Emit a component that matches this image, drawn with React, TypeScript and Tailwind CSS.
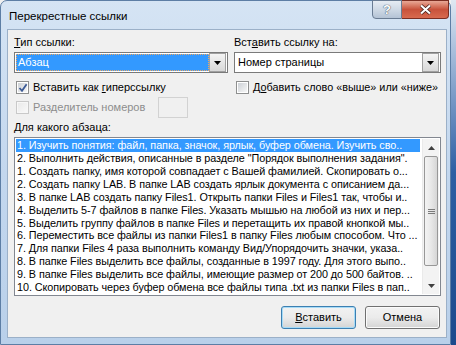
import React from "react";

const items = [
  "1. Изучить понятия: файл, папка, значок, ярлык, буфер обмена. Изучить сво..",
  '2. Выполнить действия, описанные в разделе "Порядок выполнения задания".',
  "1. Создать папку, имя которой совпадает с Вашей фамилией. Скопировать о...",
  "2. Создать папку LAB. В папке LAB создать ярлык документа с описанием да...",
  "3. В папке LAB создать папку Files1. Открыть папки Files и Files1 так, чтобы и..",
  "4. Выделить 5-7 файлов в папке Files. Указать мышью на любой из них и пер...",
  "5. Выделить группу файлов в папке Files и перетащить их правой кнопкой мы..",
  "6. Переместить все файлы из папки Files1 в папку Files любым способом. Что ...",
  "7. Для папки Files 4 раза выполнить команду Вид/Упорядочить значки, указа..",
  "8. В папке Files выделить все файлы, созданные в 1997 году. Для этого выпо..",
  "9. В папке Files выделить все файлы, имеющие размер от 200 до 500 байтов. ..",
  "10. Скопировать через буфер обмена все файлы типа .txt из папки Files в пап..",
];

function Check({ checked, disabled }: { checked?: boolean; disabled?: boolean }) {
  return (
    <span
      className={`relative w-[13px] h-[13px] shrink-0 border p-[1px] ${
        disabled ? "border-[#c9c9c9] bg-[#f7f7f7]" : "border-[#8e8f8f] bg-white"
      }`}
    >
      <span
        className={`block w-full h-full bg-gradient-to-br ${
          disabled ? "from-[#eaeaea] to-[#f8f8f8]" : "from-[#cdd1d6] to-[#f7f7f7]"
        }`}
      />
      {checked && (
        <svg className="absolute left-[1px] top-[1px]" width="10" height="10" viewBox="0 0 10 10">
          <path d="M1.5 5 L4 7.8 L8.6 1.2" fill="none" stroke="#3c5a96" strokeWidth="1.8" />
        </svg>
      )}
    </span>
  );
}

function DropArrow() {
  return (
    <span className="w-[17px] h-[19px] shrink-0 flex items-center justify-center border border-[#a0a0a0] bg-gradient-to-b from-[#f4f4f4] to-[#d8d8d8]">
      <svg width="7" height="4" viewBox="0 0 7 4">
        <path d="M0 0 H7 L3.5 4 Z" fill="#000" />
      </svg>
    </span>
  );
}

function Button({ children, primary }: { children: React.ReactNode; primary?: boolean }) {
  return (
    <div
      className={`w-[75px] h-[23px] rounded-[3px] border flex items-center justify-center ${
        primary
          ? "border-[#3c7fb1] shadow-[inset_0_0_0_1px_#a6dbf7]"
          : "border-[#707070] shadow-[inset_0_0_0_1px_#fbfbfb]"
      } bg-gradient-to-b from-[#f2f2f2] via-[#ebebeb] to-[#d4d4d4]`}
    >
      {children}
    </div>
  );
}

export default function App() {
  return (
    <div
      className="w-[456px] h-[345px] flex bg-[#f0f0f0] text-[11px] text-black leading-[15px] whitespace-nowrap"
      style={{ fontFamily: '"Liberation Sans", Arial, sans-serif' }}
    >
      {/* window */}
      <div className="w-[451px] h-[345px] flex flex-col rounded-t-[7px] border border-[#5d7ea5] bg-gradient-to-b from-[#d5e4f4] via-[#c3d7ee] to-[#b9d0ea]">
        {/* title bar */}
        <div className="h-[28px] flex items-start pl-[8px] pr-[1px]">
          <span className="pt-[8px] text-[11.5px] text-black">Перекрестные ссылки</span>
          <div className="ml-auto flex -mt-[1px]">
            <div className="w-[30px] h-[19px] rounded-bl-[4px] border border-[#6a7c93] bg-gradient-to-b from-[#e6ecf3] via-[#cfd9e5] to-[#b4c3d5] flex items-center justify-center text-[13px] font-bold text-white [text-shadow:0_0_1px_#3b4b60,0_0_1px_#3b4b60]">
              ?
            </div>
            <div className="w-[47px] h-[19px] rounded-br-[4px] border border-l-0 border-[#7b2e22] bg-gradient-to-b from-[#e8a896] via-[#c8523b] to-[#d86a4f] flex items-center justify-center">
              <svg width="13" height="11" viewBox="0 0 13 11">
                <path d="M2 1.5 L11 9.5 M11 1.5 L2 9.5" stroke="#3a1a14" strokeWidth="3.6" />
                <path d="M2 1.5 L11 9.5 M11 1.5 L2 9.5" stroke="#ffffff" strokeWidth="2.2" />
              </svg>
            </div>
          </div>
        </div>

        {/* client area */}
        <div className="ml-[6px] w-[440px] h-[309px] border border-[#9bb0c8] bg-[#f0f0f0] pl-[6px] pt-[5px]">
          <div className="flex gap-[6px]">
            {/* left column */}
            <div className="w-[214px] flex flex-col">
              <span>
                <u>Т</u>ип ссылки:
              </span>
              <div className="mt-[2px] h-[21px] border border-[#7a7a7a] bg-white flex items-center p-[1px]">
                <span className="flex-1 h-[17px] bg-[#3399ff] text-white pl-[2px] outline outline-1 outline-dotted outline-[#f0a860] -outline-offset-1 leading-[17px]">
                  Абзац
                </span>
                <DropArrow />
              </div>
              <label className="mt-[7px] h-[15px] flex items-center gap-[4px] pl-[2px]">
                <Check checked />
                <span>
                  Вставить как <u>г</u>иперссылку
                </span>
              </label>
              <div className="mt-[2px] h-[21px] flex items-center pl-[2px]">
                <Check disabled />
                <span className="ml-[4px] text-[#8d8d8d]">Разделитель номеров</span>
                <span className="ml-[13px] w-[30px] h-[21px] border border-[#d2d2d2] bg-[#f0f0f0]" />
              </div>
            </div>
            {/* right column */}
            <div className="w-[207px] flex flex-col">
              <span>
                Вст<u>а</u>вить ссылку на:
              </span>
              <div className="mt-[2px] h-[21px] border border-[#7a7a7a] bg-white flex items-center p-[1px]">
                <span className="flex-1 pl-[2px]">Номер страницы</span>
                <DropArrow />
              </div>
              <label className="mt-[7px] h-[15px] flex items-center gap-[4px] pl-[2px] text-[10.8px]">
                <Check />
                <span>
                  Д<u>о</u>бавить слово «выше» или «ниже»
                </span>
              </label>
            </div>
          </div>

          <div className="mt-[2px]">
            <u>Д</u>ля какого абзаца:
          </div>

          {/* list box */}
          <div className="mt-[2px] w-[427px] h-[159px] border border-[#828790] bg-white flex p-[1px]">
            <div className="flex-1 min-w-0 flex flex-col text-[10.8px] leading-[13px] tracking-[-0.06px]">
              {items.map((t, i) => (
                <div
                  key={i}
                  className={`h-[13px] overflow-hidden pl-[1px] ${
                    i === 0 ? "bg-[#3399ff] text-white" : ""
                  }`}
                >
                  {t}
                </div>
              ))}
            </div>
            {/* scrollbar */}
            <div className="w-[17px] ml-[2px] flex flex-col bg-[#f3f3f3] border-l border-[#eaeaea]">
              <div className="h-[17px] flex items-center justify-center">
                <svg width="7" height="4" viewBox="0 0 7 4">
                  <path d="M0 4 H7 L3.5 0 Z" fill="#404040" />
                </svg>
              </div>
              <div className="mx-[1px] h-[110px] rounded-[2px] border border-[#979797] bg-gradient-to-r from-[#f3f3f3] via-[#e8e8e8] to-[#d6d6d6] flex items-center justify-center">
                <div className="flex flex-col gap-[1px]">
                  <span className="w-[7px] h-[1px] bg-[#7a7a7a]" />
                  <span className="w-[7px] h-[1px] bg-[#7a7a7a]" />
                  <span className="w-[7px] h-[1px] bg-[#7a7a7a]" />
                </div>
              </div>
              <div className="flex-1" />
              <div className="h-[17px] flex items-center justify-center">
                <svg width="7" height="4" viewBox="0 0 7 4">
                  <path d="M0 0 H7 L3.5 4 Z" fill="#404040" />
                </svg>
              </div>
            </div>
          </div>

          {/* buttons */}
          <div className="mt-[10px] w-[427px] flex justify-end gap-[9px] pr-[1px]">
            <Button primary>
              <span>
                <u>В</u>ставить
              </span>
            </Button>
            <Button>Отмена</Button>
          </div>
        </div>
      </div>
      {/* desktop edge */}
      <div className="flex-1 bg-gradient-to-b from-[#dfe8f2] via-[#2d5fa3] to-[#1c4a8c]" />
    </div>
  );
}
